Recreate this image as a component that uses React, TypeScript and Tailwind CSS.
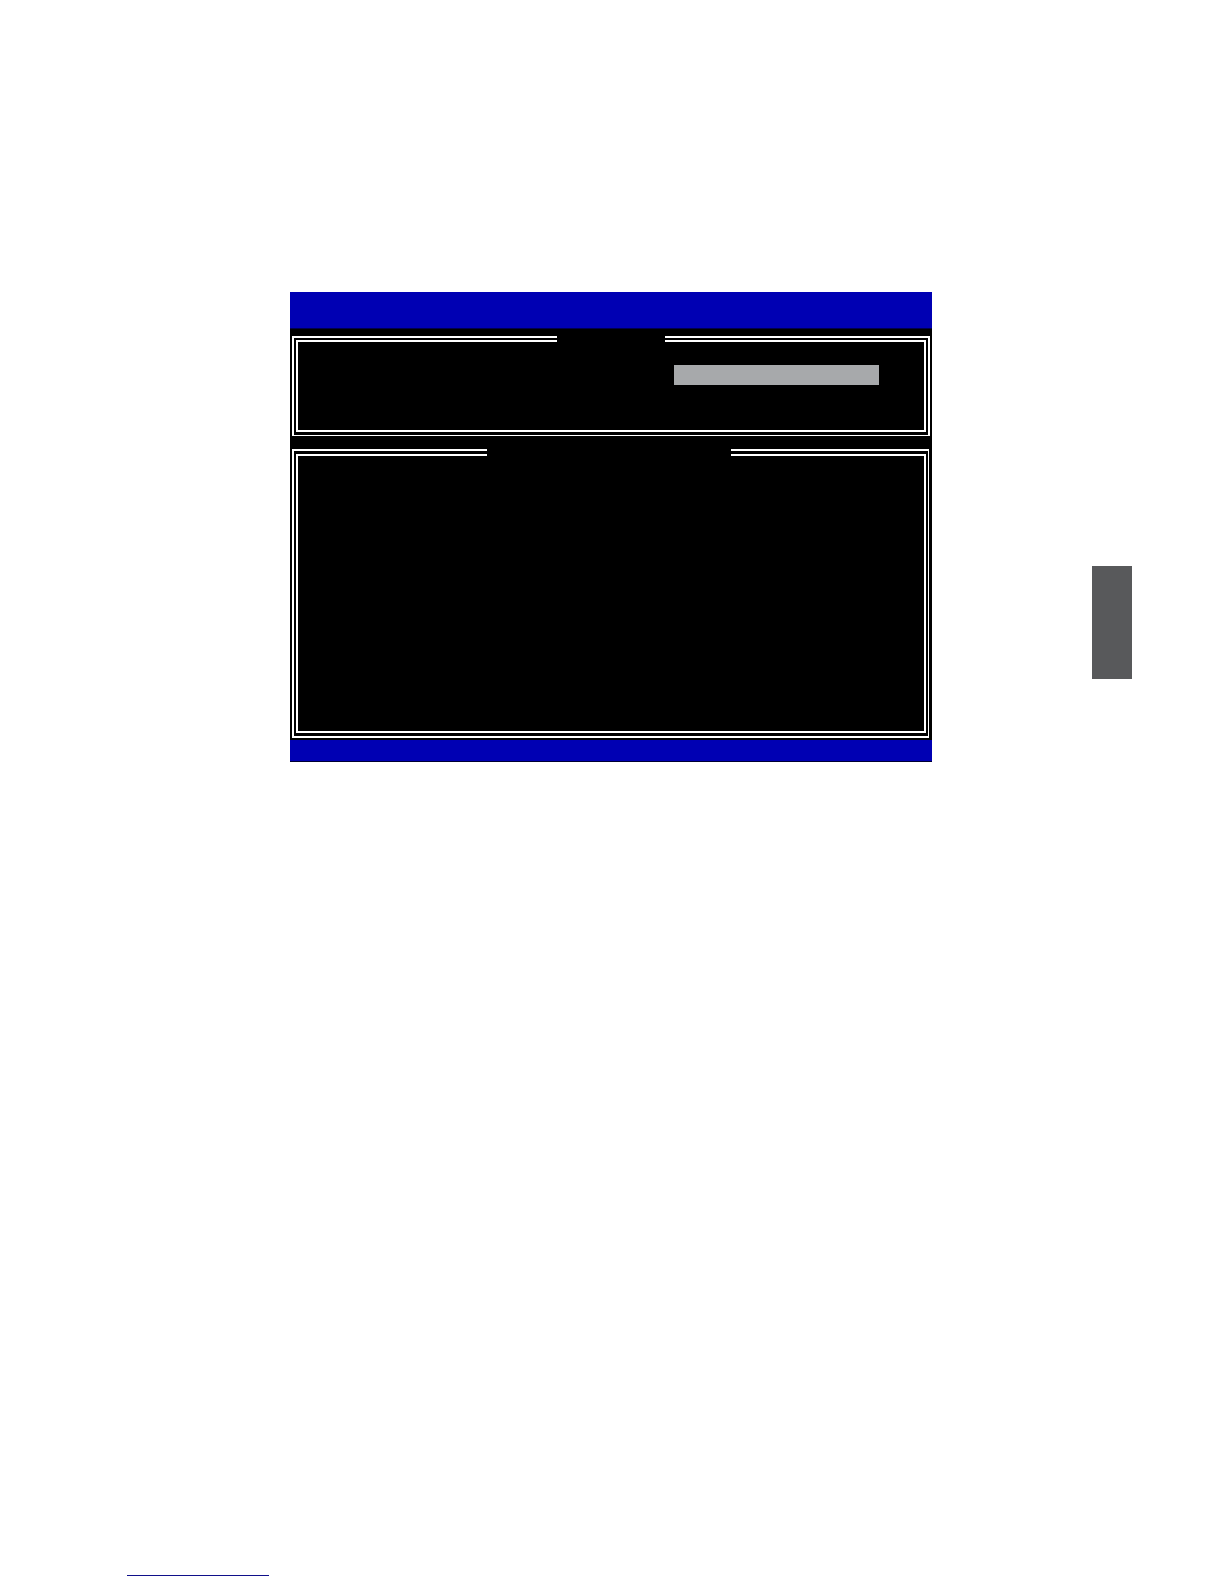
import type { ReactNode } from "react";

interface PanelProps {
  className: string;
  innerClassName: string;
  titleClassName: string;
  children?: ReactNode;
}

// Double-ruled frame; the title gap interrupts both top rules.
function Panel({ className, innerClassName, titleClassName, children }: PanelProps) {
  return (
    <section className={`relative border-white ${className}`}>
      <div className={`border-2 border-white ${innerClassName}`}>{children}</div>
      <div className={`absolute -top-0.5 h-2 bg-black ${titleClassName}`} />
    </section>
  );
}

export default function App() {
  return (
    <div className="flex min-h-screen flex-col bg-white pt-73 font-['Liberation_Sans',sans-serif]">
      <main className="grid grid-cols-[290fr_642fr_160fr_40fr_92fr] items-start">
        <div className="col-start-2 bg-black">
          <header className="h-[37px] border-b border-[#00004d] bg-[#0000b3]" />

          <div className="px-0.5 pt-[7px] pb-0.5">
            <Panel
              className="mb-[13px] border-2 border-b p-0.5 pb-[3px]"
              innerClassName="pt-[23px] pr-[45px] pb-[45px]"
              titleClassName="left-[263px] w-[108px]"
            >
              <input
                type="text"
                aria-label="Selected item"
                className="ml-auto block h-5 w-[205px] bg-[#a7a9ab] px-1 text-sm outline-none"
              />
            </Panel>

            <Panel
              className="mr-px border-2 border-r px-0.5 py-[3px]"
              innerClassName="min-h-[279px]"
              titleClassName="left-[193px] w-[244px]"
            />
          </div>

          <footer className="h-[22px] border-b border-[#000033] bg-[#0000b3]" />
        </div>

        <aside className="col-start-4 mt-[274px] h-[113px] bg-[#58595b]" />
      </main>

      <footer className="mt-auto pb-2 pl-[127px]">
        <a
          href="#top"
          aria-label="Back to top"
          className="block h-5 w-[142px] border-b border-[#10108a]"
        />
      </footer>
    </div>
  );
}
